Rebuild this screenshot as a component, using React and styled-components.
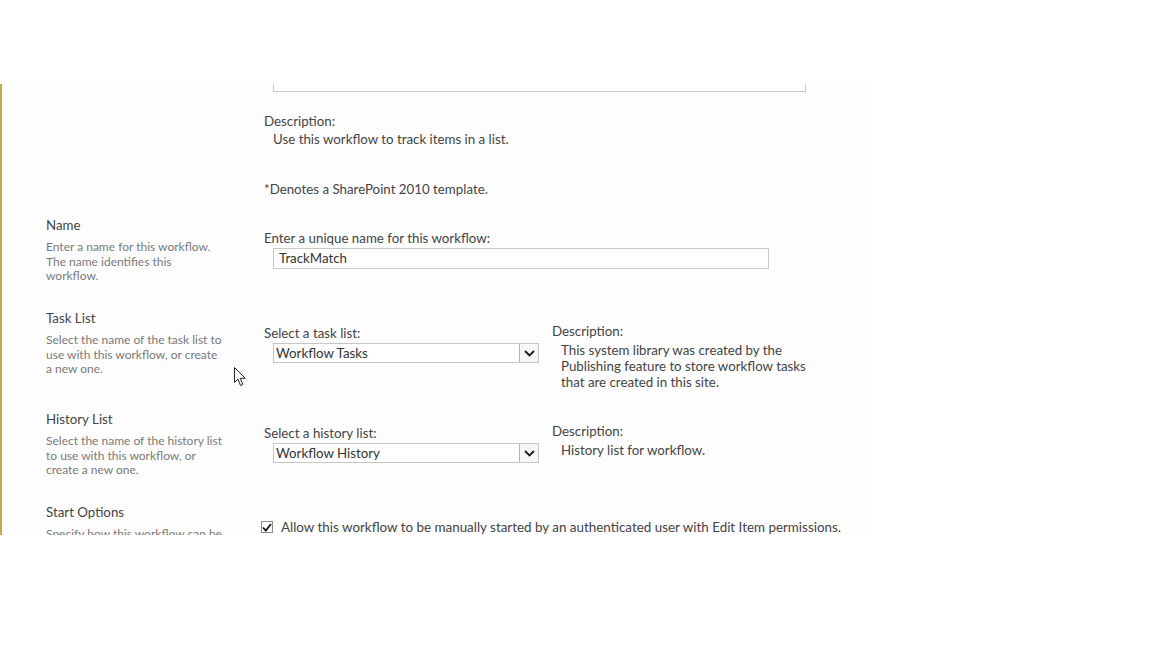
import React from 'react';
import styled, { createGlobalStyle } from 'styled-components';

const Global = createGlobalStyle`
  html, body { margin: 0; padding: 0; background: #fff; }
  body { font-family: 'Lato', 'Open Sans', sans-serif; color: #444; }
`;

const Page = styled.div`
  width: 1152px;
  height: 648px;
  padding-top: 84px;
  box-sizing: border-box;
  background: #fff;
`;

const Panel = styled.div`
  position: relative;
  width: 870px;
  height: 451px;
  overflow: hidden;
  background: #fdfdfd;
  border-left: 2px solid #c2a94e;
  box-sizing: border-box;
`;

const Scroller = styled.div`
  margin-top: -22px;
  padding-left: 44px;
`;

const Section = styled.div`
  display: flex;
  height: ${(p) => p.$h}px;
`;

const LeftCol = styled.div`
  width: 218px;
  flex: none;
`;

const RightCol = styled.div`
  display: flex;
  flex-direction: ${(p) => (p.$row ? 'row' : 'column')};
  align-items: flex-start;
`;

const Heading = styled.div`
  font-size: 13.3px;
  line-height: 16px;
  color: #444;
`;

const Help = styled.div`
  margin-top: 7px;
  font-size: 12px;
  line-height: 14.5px;
  color: #7a7a7a;
`;

const Label = styled.div`
  font-size: 13.3px;
  line-height: 18px;
  color: #444;
  margin-top: ${(p) => p.$mt || 0}px;
`;

const Indented = styled.div`
  margin-left: 9px;
  font-size: 13.3px;
  line-height: ${(p) => p.$lh || 18}px;
  margin-top: ${(p) => p.$mt || 0}px;
  color: #444;
`;

const TextBox = styled.div`
  margin-left: 9px;
  margin-top: ${(p) => p.$mt || 0}px;
  width: ${(p) => p.$w}px;
  height: ${(p) => p.$h}px;
  box-sizing: border-box;
  border: 1px solid #c9c9c9;
  background: #fff;
  font-size: 13.3px;
  line-height: ${(p) => p.$h - 2}px;
  padding-left: 5px;
  color: #333;
`;

const FieldCol = styled.div`
  width: 288px;
  flex: none;
  padding-top: ${(p) => p.$pt}px;
`;

const DescCol = styled.div`
  padding-top: ${(p) => p.$pt}px;
`;

const Select = styled.div`
  margin-left: 9px;
  margin-top: 1px;
  width: 266px;
  height: 20px;
  box-sizing: border-box;
  border: 1px solid #c6c6c6;
  background: #fff;
  display: flex;
  align-items: stretch;
`;

const SelectValue = styled.div`
  flex: 1;
  font-size: 13.3px;
  line-height: 18px;
  padding-left: 2px;
  color: #333;
`;

const DropButton = styled.div`
  width: 18px;
  border-left: 1px solid #b5b5b5;
  background: #f6f6f6;
  display: flex;
  align-items: center;
  justify-content: center;
`;

const CheckRow = styled.div`
  display: flex;
  align-items: center;
  margin-top: 16px;
  margin-left: -3px;
`;

const Box = styled.div`
  width: 12px;
  height: 12px;
  box-sizing: border-box;
  border: 1px solid #8a8a8a;
  background: #fff;
  display: flex;
  align-items: center;
  justify-content: center;
  margin-right: 8px;
`;

const CheckText = styled.div`
  font-size: 13.4px;
  line-height: 14px;
  color: #444;
`;

const Cursor = styled.svg`
  position: absolute;
  left: 232px;
  top: 283px;
`;

function Chevron() {
  return (
    <svg width="11" height="7" viewBox="0 0 11 7">
      <path d="M1 1 L5.5 5.5 L10 1" fill="none" stroke="#1a1a1a" strokeWidth="1.8" />
    </svg>
  );
}

function DropDown({ value }) {
  return (
    <Select>
      <SelectValue>{value}</SelectValue>
      <DropButton>
        <Chevron />
      </DropButton>
    </Select>
  );
}

export default function App() {
  return (
    <>
      <Global />
      <Page>
        <Panel>
          <Scroller>
            <Section $h={155}>
              <LeftCol />
              <RightCol>
                <TextBox $w={533} $h={30} />
                <Label $mt={20}>Description:</Label>
                <Indented>Use this workflow to track items in a list.</Indented>
                <Label $mt={32}>*Denotes a SharePoint 2010 template.</Label>
              </RightCol>
            </Section>

            <Section $h={93}>
              <LeftCol>
                <Heading>Name</Heading>
                <Help>
                  Enter a name for this workflow.
                  <br />
                  The name identifies this
                  <br />
                  workflow.
                </Help>
              </LeftCol>
              <RightCol>
                <Label $mt={12}>Enter a unique name for this workflow:</Label>
                <TextBox $w={496} $h={21} $mt={1}>
                  TrackMatch
                </TextBox>
              </RightCol>
            </Section>

            <Section $h={101}>
              <LeftCol>
                <Heading>Task List</Heading>
                <Help>
                  Select the name of the task list to
                  <br />
                  use with this workflow, or create
                  <br />a new one.
                </Help>
              </LeftCol>
              <RightCol $row>
                <FieldCol $pt={14}>
                  <Label>Select a task list:</Label>
                  <DropDown value="Workflow Tasks" />
                </FieldCol>
                <DescCol $pt={12}>
                  <Label>Description:</Label>
                  <Indented $lh={16} $mt={2}>
                    This system library was created by the
                    <br />
                    Publishing feature to store workflow tasks
                    <br />
                    that are created in this site.
                  </Indented>
                </DescCol>
              </RightCol>
            </Section>

            <Section $h={93}>
              <LeftCol>
                <Heading>History List</Heading>
                <Help>
                  Select the name of the history list
                  <br />
                  to use with this workflow, or
                  <br />
                  create a new one.
                </Help>
              </LeftCol>
              <RightCol $row>
                <FieldCol $pt={13}>
                  <Label>Select a history list:</Label>
                  <DropDown value="Workflow History" />
                </FieldCol>
                <DescCol $pt={11}>
                  <Label>Description:</Label>
                  <Indented $lh={16} $mt={2}>
                    History list for workflow.
                  </Indented>
                </DescCol>
              </RightCol>
            </Section>

            <Section $h={80}>
              <LeftCol>
                <Heading>Start Options</Heading>
                <Help>
                  Specify how this workflow can be
                  <br />
                  started.
                </Help>
              </LeftCol>
              <RightCol>
                <CheckRow>
                  <Box>
                    <svg width="10" height="9" viewBox="0 0 10 9">
                      <path d="M1 4.5 L3.8 7.5 L9 1" fill="none" stroke="#111" strokeWidth="1.8" />
                    </svg>
                  </Box>
                  <CheckText>
                    Allow this workflow to be manually started by an authenticated user with Edit Item permissions.
                  </CheckText>
                </CheckRow>
              </RightCol>
            </Section>
          </Scroller>
          <Cursor width="13" height="20" viewBox="0 0 13 20">
            <path
              d="M0.5 0.5 L0.5 15.5 L4 12 L6.5 18.5 L8.8 17.5 L6.3 11.3 L11.3 11.3 Z"
              fill="#fff"
              stroke="#222"
              strokeWidth="1"
            />
          </Cursor>
        </Panel>
      </Page>
    </>
  );
}
